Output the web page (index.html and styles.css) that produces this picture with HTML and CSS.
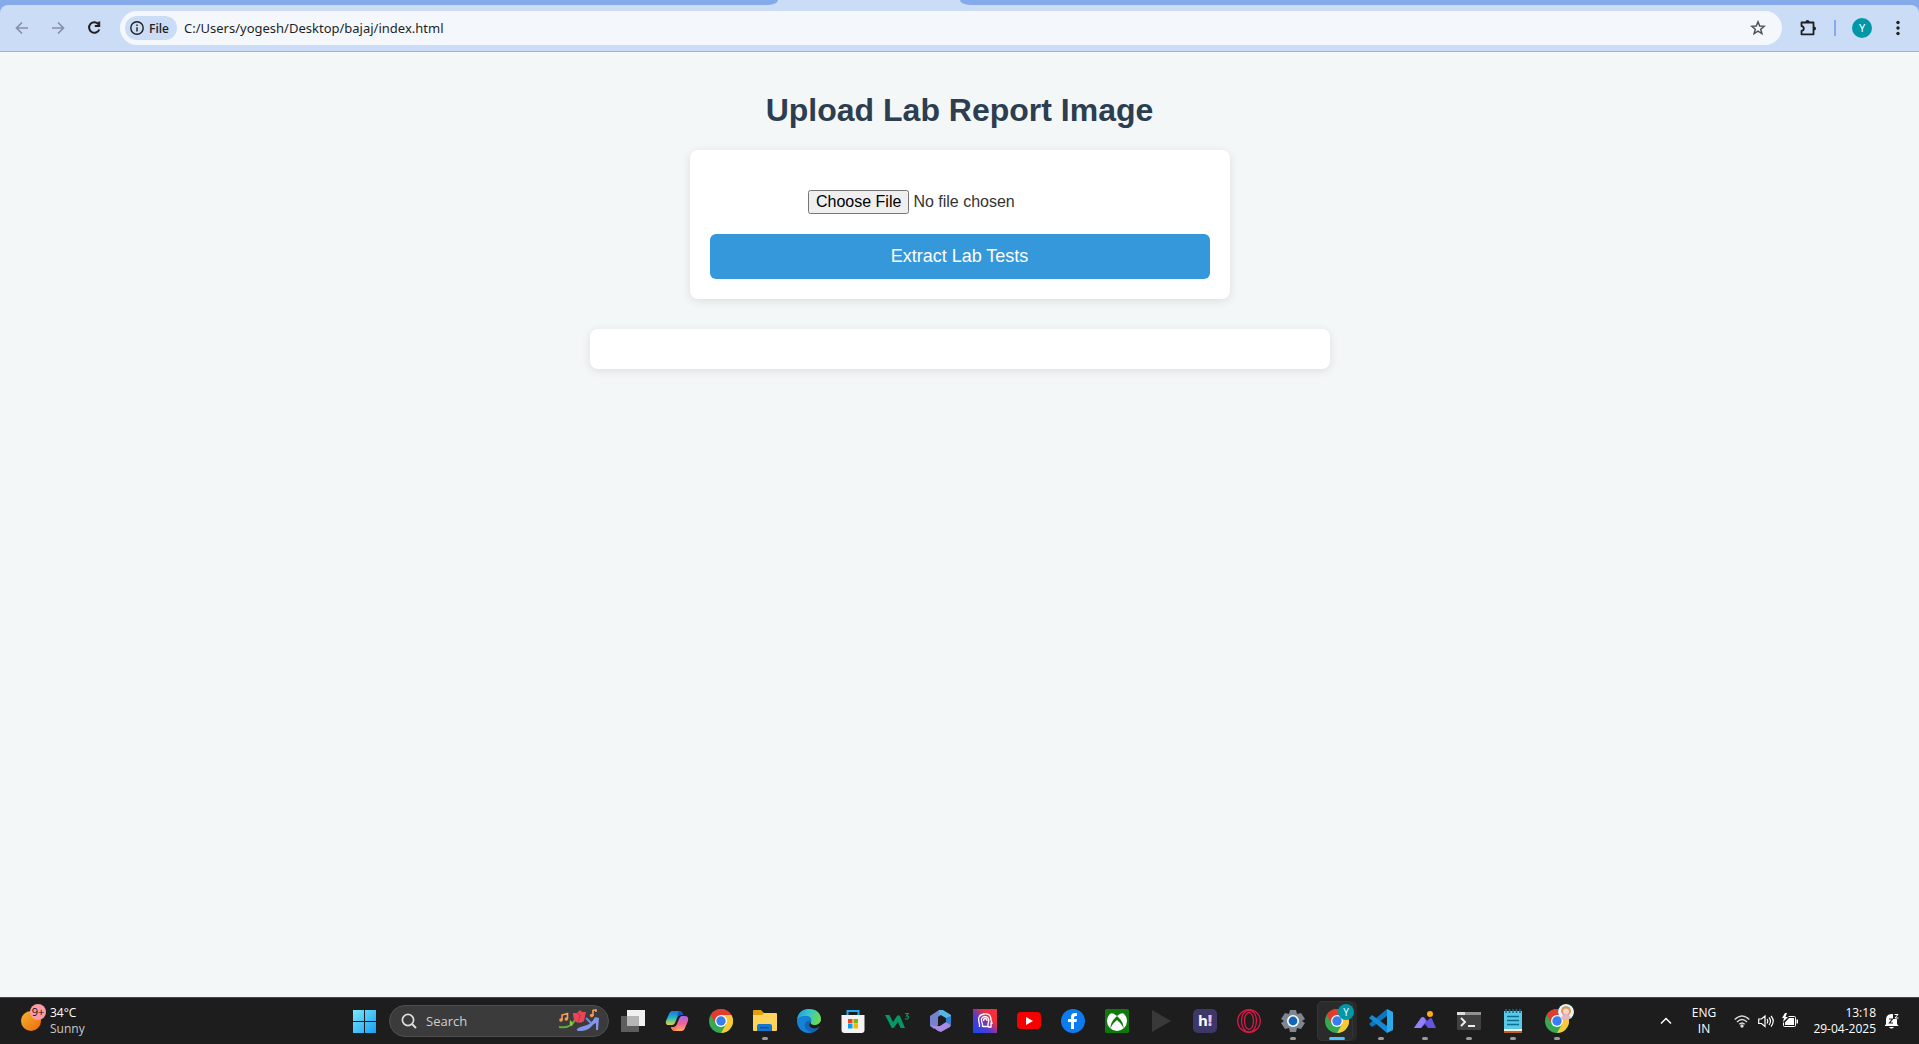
FILE: index.html
```html
<!DOCTYPE html>
<html lang="en">
<head>
<meta charset="utf-8">
<title>Upload Lab Report Image</title>
<link rel="stylesheet" href="styles.css">
</head>
<body>
<header class="browser">
  <div class="tabstrip"><span class="strip strip-left"></span><span class="strip strip-right"></span></div>
  <div class="toolbar-back">
  <nav class="toolbar" aria-label="Browser toolbar">
    <button class="tool muted" aria-label="Back"><svg width="16" height="16" viewBox="0 0 16 16" fill="none" stroke="currentColor" stroke-width="1.7"><path d="M14 8H3M8 2.5 2.5 8 8 13.500"/></svg></button>
    <button class="tool muted" aria-label="Forward"><svg width="16" height="16" viewBox="0 0 16 16" fill="none" stroke="currentColor" stroke-width="1.7"><path d="M2 8h11M8 2.500 13.500 8 8 13.500"/></svg></button>
    <button class="tool" aria-label="Reload"><svg width="16" height="16" viewBox="0 0 16 16" fill="none" stroke="currentColor" stroke-width="2"><path d="M12.600 4.300A5.300 5.300 0 1 0 13.300 9.500"/><path d="M13.200 1.600V6H8.800"/></svg></button>
    <div class="omnibox">
      <button class="chip"><svg width="14" height="14" viewBox="0 0 14 14" fill="none" stroke="currentColor" stroke-width="1.400"><circle cx="7" cy="7" r="6.200"/><path d="M7 6.200v4.200M7 3.500v1.500"/></svg>File</button>
      <input class="url" type="text" aria-label="Address" value="C:/Users/yogesh/Desktop/bajaj/index.html">
      <button class="tool star" aria-label="Bookmark"><svg width="16" height="16" viewBox="0 0 16 16" fill="none" stroke="currentColor" stroke-width="1.500"><path d="m8 1.800 1.700 4.200 4.500.3-3.500 2.900 1.200 4.400L8 11.200l-3.900 2.400 1.200-4.400-3.500-2.900 4.500-.3z"/></svg></button>
    </div>
    <button class="tool" aria-label="Extensions"><svg width="18" height="18" viewBox="0 0 18 18" fill="none" stroke="currentColor" stroke-width="1.800"><path d="M2.500 3.500h12v11.800h-12v-3.300q2.300-.5 2.300-2.500T2.500 7z" stroke-linejoin="round"/><path d="M6.500 3q0-2 2-2t2 2zM15 7.500q2 0 2 2t-2 2z" fill="currentColor" stroke="none"/></svg></button>
    <span class="divider"></span>
    <button class="tool" aria-label="Profile"><span class="avatar">Y</span></button>
    <button class="tool" aria-label="Menu"><svg width="4" height="16" viewBox="0 0 4 16" fill="currentColor"><circle cx="2" cy="2.500" r="1.700"/><circle cx="2" cy="8" r="1.700"/><circle cx="2" cy="13.500" r="1.700"/></svg></button>
  </nav>
  </div>
</header>

<main class="page">
  <h1 class="title">Upload Lab Report Image</h1>
  <form class="card">
    <input class="file" type="file" aria-label="Lab report image">
    <button class="submit" type="button">Extract Lab Tests</button>
  </form>
  <section class="results" aria-label="Results"></section>
</main>

<footer class="taskbar">
  <button class="weather">
    <span class="sun"><span class="badge">9+</span></span>
    <span class="weather-text"><span>34°C</span><span class="dim">Sunny</span></span>
  </button>
  <div class="apps">
    <button class="app" aria-label="Start"><svg viewBox="0 0 24 24"><defs><linearGradient id="win" x1="0" y1="0" x2="1" y2="1" ><stop stop-color="#7be8fb"/><stop offset="1" stop-color="#149ff5"/></linearGradient></defs><path fill="url(#win)" d="M1 1h11v11H1zM13 1h11v11H13zM1 13h11v11H1zM13 13h11v11H13z"/></svg></button>
    <label class="search">
      <svg width="16" height="16" viewBox="0 0 16 16" fill="none" stroke="#ddd" stroke-width="1.700"><circle cx="7" cy="7" r="5.600"/><path d="m11 11 4 4" stroke-width="2"/></svg>
      <input class="search-input" type="text" placeholder="Search" aria-label="Search">
      <svg width="42" height="24" viewBox="0 0 42 24"><g fill="none" stroke="#f0a060" stroke-width="1.600"><path d="M4 11V6l5.500-1.500V10"/><path d="M35 7V1.500l3-.5v2"/></g><g fill="#f09a58"><circle cx="3" cy="11" r="1.800"/><circle cx="8.300" cy="10" r="1.800"/><circle cx="33.700" cy="6.500" r="1.800"/></g><path d="M1 18q11 2 16-7" stroke="#5cae36" stroke-width="2" fill="none"/><path d="M12 11q-1 6 2 6 2-3-2-6z" fill="#8fca45"/><path d="m15 4 4 0 3-3 2 2 4 0-2 9q-3 3-8 1-3-2-3-9z" fill="#ec4457"/><path d="m19 4 3 2q0 4-2 6" fill="none" stroke="#c82848"/><path d="M19 20q2-2 7-3 8-2 11-9l4 1-1 12h-2v-7q-3 1-5 4-4 4-11 4-4 0-3-2z" fill="#8295ea"/><path d="m28 9 5 5" stroke="#6d8df0" fill="none" stroke-width="2"/></svg>
    </label>
    <button class="app" aria-label="Task view"><svg viewBox="0 0 24 24"><path fill="#f0f0f0" d="M6 1h18v16H6z"/><path fill="#5d5d5d" d="M0 7h18v16H0z"/><path fill="#b5b5b5" d="M6 7h12v10H6z"/></svg></button>
    <button class="app" aria-label="Copilot"><svg viewBox="0 0 24 24"><defs><linearGradient id="cp1" x2="0" y2="1"><stop stop-color="#1875e5"/><stop offset=".5" stop-color="#25b9c2"/><stop offset="1" stop-color="#e9d33c"/></linearGradient><linearGradient id="cp2" x2="0" y2="1"><stop stop-color="#a864e8"/><stop offset=".5" stop-color="#f06297"/><stop offset="1" stop-color="#ffab61"/></linearGradient></defs><path d="M7 2h7q3 0 4 4h-3q-2 0-3 3l-2 5q-1 2-3 2H4q-4 0-3-4l3-7q1-3 3-3z" fill="url(#cp1)"/><path d="M17 22h-7q-3 0-4-4h3q2 0 3-3l2-5q1-3 3-3h3q4 0 3 5l-3 7q-1 3-3 3z" fill="url(#cp2)"/><path d="M14 2q3 0 4 4h-3q-2 0-3 2 1-5 2-6z" fill="#1556c4"/><path d="M10 22q-3 0-4-4h3q2 0 3-2 0 4-2 6z" fill="#ff784d"/></svg></button>
    <button class="app" aria-label="Chrome"><svg viewBox="0 0 24 24"><defs><g id="chrome"><circle cx="12" cy="12" r="12" fill="#35a852"/><path d="M12 12 1.600 6A12 12 0 0 1 22.400 6z" fill="#e33b2e"/><path d="M12 6h10.400A12 12 0 0 1 12 24l5.200-9z" fill="#fcc934"/><path d="M1.600 6 6.800 15 12 6z" fill="#e33b2e"/><circle cx="12" cy="12" r="6" fill="#fff"/><circle cx="12" cy="12" r="4.700" fill="#377ff0"/></g></defs><use href="#chrome"/></svg></button>
    <button class="app open" aria-label="File Explorer"><svg viewBox="0 0 24 24"><path fill="#dfa009" d="M0 2q0-1 1-1h7l3 3H23v4H0z"/><path fill="#ffd45b" d="M0 6h9l2-2h12q1 0 1 1v16q0 1-1 1H1q-1 0-1-1z"/><path fill="#1675ce" d="M4 22v-5q0-2 2-2h11q2 0 2 2v5z"/><path fill="#0b559e" d="M7 18h9v1.500H7z"/></svg></button>
    <button class="app" aria-label="Edge"><svg viewBox="0 0 24 24"><defs><linearGradient id="ed" x1="0" y1="0" x2="1" y2=".3"><stop stop-color="#2397dc"/><stop offset=".5" stop-color="#32c5d0"/><stop offset="1" stop-color="#69da58"/></linearGradient></defs><circle cx="12" cy="12" r="12" fill="#1265b6"/><path d="M0 11C1 3 6 0 12 0c8 0 12 5 12 10 0 4-3 6-6 6-4 0-5-1-4-3 1-3-1-6-5-6-4 0-8 2-9 4z" fill="url(#ed)"/><path d="M0 11c2-3 6-4 9-4 4 0 6 3 5 6-1-2-5-2-6 2-1 5 3 8 8 8-9 3-16-3-16-12z" fill="#1682d5"/><path d="M14 13c-1 2 0 3 4 3 3 0 5-2 6-4v6c-1-1-2 0-4 1-6 2-10-3-6-6z" fill="#1d1d1d"/></svg></button>
    <button class="app" aria-label="Microsoft Store"><svg viewBox="0 0 24 24"><path d="M6.500 7V2h11v5" stroke="#22a8ef" stroke-width="2" fill="none"/><path fill="#f3f3f3" d="M.5 6h23v15q0 3-3 3h-17q-3 0-3-3z"/><path fill="#ef4423" d="M7 10h4.500v4.500H7z"/><path fill="#7db700" d="M12.500 10H17v4.500h-4.500z"/><path fill="#00a2ed" d="M7 15h4.500v4.500H7z"/><path fill="#fbb500" d="M12.500 15H17v4.500h-4.500z"/></svg></button>
    <button class="app" aria-label="W3Schools"><svg viewBox="0 0 24 24"><path d="M0 6h4.500L8 13l4-6q1.500-1.500 3 0l5 12h-4.500L13 13l-4 5.500q-1.500 1-2.500 0z" fill="#059862"/><path d="M20 4.500h3.300l-1.800 2.300q2.300 0 1.800 2t-3.300 1" stroke="#059862" stroke-width="1.200" fill="none"/></svg></button>
    <button class="app" aria-label="Microsoft 365"><svg viewBox="0 0 24 24"><path d="m10 1 5 3-6 4v8l-4 4-4-3V7z" fill="#7682ce"/><path d="m10 1 4 0 8 5v10l-5-3V9l-7-4z" fill="#53b8e5"/><path d="m1 16 5 1 5 0 6-4 5 3-1 2-9 5-3-1z" fill="#a98ae6"/><path d="M17 9v4l5 3V7z" fill="#357fd2"/></svg></button>
    <button class="app" aria-label="Head app"><svg viewBox="0 0 24 24"><defs><linearGradient id="hd" x1="0" y1="1" x2="1" y2="0"><stop stop-color="#1348ef"/><stop offset=".4" stop-color="#573acb"/><stop offset=".7" stop-color="#f52e3e"/></linearGradient></defs><path fill="url(#hd)" d="M0 0h24v24H0z"/><g fill="none" stroke="#fff" stroke-width="1.300"><path d="M6.500 18v-3q-3-9 4.500-10 7-1 7 6l1 3h-1v4h-3"/><path d="M9.500 18v-3q-3-7 2.500-7.500 5.500.5 3 7.500v2.500h-5"/><path d="M10.500 12q0-2.500 1.800-2.500T14 12"/></g></svg></button>
    <button class="app" aria-label="YouTube"><svg viewBox="0 0 24 24"><rect y="3" width="24" height="17" rx="4" fill="#f80000"/><path d="m9 8 7 4-7 4z" fill="#fff"/></svg></button>
    <button class="app" aria-label="Facebook"><svg viewBox="0 0 24 24"><circle cx="12" cy="12" r="12" fill="#0d7cf0"/><path d="M10 20v-7H7v-3h3V8q0-4 4-4h2v3h-1.500q-1.500 0-1.500 1.500V10h3l-.5 3H13v7z" fill="#fff"/></svg></button>
    <button class="app" aria-label="Xbox"><svg viewBox="0 0 24 24"><rect width="24" height="24" rx="1.500" fill="#0e7a0d"/><circle cx="12" cy="12" r="10" fill="#fff"/><path d="M5 4q4 0 7 3 3-3 7-3-3-2.500-7-2.500T5 4zM12 11q6 5 7 10-1-9-5-12l-2-2-2 2q-4 3-5 12 1-5 7-10z" fill="#0e7a0d"/></svg></button>
    <button class="app" aria-label="Player"><svg viewBox="0 0 24 24"><path d="M3 1v22l19-11z" fill="#393939"/></svg></button>
    <button class="app" aria-label="Hi"><span class="hi">h<b>!</b></span></button>
    <button class="app" aria-label="Opera"><svg viewBox="0 0 24 24" fill="none" stroke="#dc1848" stroke-width="1.300"><circle cx="12" cy="12" r="11.300"/><ellipse cx="12" cy="12" rx="7.500" ry="11"/><ellipse cx="12" cy="12" rx="4.500" ry="8.500"/></svg></button>
    <button class="app open" aria-label="Settings"><svg viewBox="0 0 24 24"><path d="M9 1h6l1 4 4-1 4 6-3 2 3 2-4 6-4-1-1 4H9l-1-4-4 1-4-6 3-2-3-2 4-6 4 1z" fill="#7d8790"/><circle cx="12" cy="12" r="6" fill="#fff"/><circle cx="12" cy="12" r="4.400" fill="#1266b8"/></svg></button>
    <button class="app open current" aria-label="Chrome, Y"><svg viewBox="0 0 24 24"><use href="#chrome"/></svg><span class="profile">Y</span></button>
    <button class="app open" aria-label="Visual Studio Code"><svg viewBox="0 0 24 24"><path d="m18 0 6 3v18l-6 3z" fill="#2aa9ee"/><path d="M18 0v7L3 18l-3-3z" fill="#0878bf"/><path d="m0 9 3-3 15 11v7z" fill="#1489d5"/></svg></button>
    <button class="app open" aria-label="Mountains"><svg viewBox="0 0 24 24"><path d="M1 19 8 9q2-2 4 0l2 3 2-2q2-2 3 0l4 9h-8l-3-4-4 4z" fill="#6554df"/><path d="M1 19 8 9q2-2 3 0l2 3-5 7z" fill="#9181fa"/><circle cx="17" cy="5" r="3" fill="#ffac15"/></svg></button>
    <button class="app open" aria-label="Terminal"><svg viewBox="0 0 24 24"><path fill="#414141" d="M0 6h24v14q0 1-1 1H1q-1 0-1-1z"/><path fill="#929292" d="M0 3h24v3H0z"/><path fill="#dedede" d="M0 3h8v3H0z"/><path d="m4 9 4 4-4 4M11 17h7" fill="none" stroke="#eee" stroke-width="2"/></svg></button>
    <button class="app open" aria-label="Notepad"><svg viewBox="0 0 24 24"><path fill="#5bc8e6" d="M3 2h18v19H3z"/><path fill="#f4f1e9" d="M3 20h18v2H3z"/><path fill="#bd6515" d="M3 22h18v2H3z"/><path d="M5 0v4M8.500 0v4M12 0v4M15.500 0v4M19 0v4M6 7.500h12M6 11.500h12M6 15.500h12" stroke="#096e91" stroke-width="1.500"/></svg></button>
    <button class="app open" aria-label="Chrome, second profile"><svg viewBox="0 0 24 24"><use href="#chrome"/></svg><svg class="profile" viewBox="0 0 16 16"><circle cx="8" cy="8" r="8" fill="#f3eef0"/><path d="M3 8q0-6 5-6t5 6l-2 3H5z" fill="#cf9b62"/><circle cx="8" cy="7.500" r="3" fill="#f8d7bf"/><path d="M3 14q2-4 5-4t5 4q-5 4-10 0z" fill="#e5b4c8"/></svg></button>
  </div>
  <div class="tray">
    <button class="tray-btn chevron" aria-label="Hidden icons"><svg width="12" height="8" viewBox="0 0 12 8" fill="none" stroke="#fff" stroke-width="1.500"><path d="m1 6.500 5-5 5 5"/></svg></button>
    <button class="tray-btn lang"><span>ENG</span><span>IN</span></button>
    <button class="tray-btn status" aria-label="Network, volume, battery">
      <svg width="16" height="16" viewBox="0 0 16 16" fill="none" stroke="#ddd" stroke-width="1.400"><path d="M.7 6.500q7.300-7 14.600 0M3 9q5-4.800 10 0M5.300 11.300q2.700-2.600 5.400 0"/><circle cx="8" cy="13" r="1" fill="#fff"/></svg>
      <svg width="16" height="16" viewBox="0 0 16 16" fill="none" stroke="#fff" stroke-width="1.200"><path d="M.7 6h2.800L7 3v10.500L3.500 10.500H.7zM9 6q1.500 2 0 4.500M11 4.500q3 3.500 0 7.500M13 3q4.500 5 0 10.500"/></svg>
      <svg width="16" height="16" viewBox="0 0 16 16"><path d="M6.500 3.500h6q1 0 1 1v8q0 1-1 1h-10q-1 0-1-1V9.500" fill="none" stroke="#fff"/><path d="M7 5h5v7H3V9.500zM14.500 6.500H16v4h-1.500z" fill="#fff"/><path d="M3 0 0 5h2L1 9l5-5H3.500L5 0z" fill="#fff"/></svg>
    </button>
    <button class="tray-btn clock"><span>13:18</span><span>29-04-2025</span></button>
    <button class="tray-btn bell" aria-label="Notifications"><svg width="16" height="16" viewBox="0 0 16 16"><path d="M2 11V7q0-6 6-6 5 0 5 6v4l1.500 2H.7zM5 14h5q-2.500 3-5 0z" fill="#fff"/><path d="M5 6h3.500L5.500 10H9" stroke="#1d1d1d" stroke-width="1.200" fill="none"/><path d="M9 0h6v6H9z" fill="#1d1d1d"/><path d="M10.500 1.500h3.500l-3 3.500h3.500" stroke="#fff" fill="none"/></svg></button>
  </div>
</footer>
</body>
</html>
```
FILE: styles.css
```css
* { box-sizing: border-box; }

body {
  margin: 0;
  min-height: 100vh;
  display: flex;
  flex-direction: column;
  background: #f4f7f8;
  color: #333;
  font-family: "Liberation Sans", Arial, sans-serif;
}

button { font: inherit; color: inherit; background: none; border: 0; padding: 0; }
svg { display: block; flex: none; }

/* Browser chrome */
.browser { font-family: "Noto Sans", "Open Sans", sans-serif; background: #cbdcf6; }
.tabstrip { display: flex; justify-content: space-between; height: 5px; }
.strip { background: #84aaea; }
.strip-left { width: calc(50% - 182px); border-bottom-right-radius: 10px 5px; }
.strip-right { width: 50%; border-bottom-left-radius: 10px 5px; }
.toolbar-back { background: #84aaea; }
.toolbar {
  display: flex;
  align-items: center;
  height: 47px;
  padding: 0 3px 0 4px;
  background: #cbdcf6;
  border-bottom: 1px solid #a3b0c8;
  border-radius: 8px 8px 0 0;
}
.tool { width: 36px; height: 34px; display: flex; align-items: center; justify-content: center; color: #1f1f1f; }
.muted { color: #8590a6; }
.omnibox {
  flex: 1;
  display: flex;
  align-items: center;
  height: 34px;
  margin: 0 8px;
  padding: 0 6px 0 5px;
  border-radius: 17px;
  background: #f4f8fd;
}
.chip {
  display: flex;
  align-items: center;
  gap: 5px;
  height: 24px;
  padding: 0 8px 0 5px;
  border-radius: 12px;
  background: #cbdcf6;
  color: #1f1f1f;
  font: 600 12px "Open Sans", "Noto Sans", sans-serif;
}
.url { flex: 1; border: 0; padding: 0 7px; background: none; color: #1f1f1f; font: 13px "Noto Sans", "Open Sans", sans-serif; outline: 0; }
.star { color: #50545a; }
.divider { width: 2px; height: 16px; margin: 0 8px; background: #84aaea; }
.avatar { width: 20px; height: 20px; border-radius: 50%; background: #0097a7; color: #fff; font-size: 11px; line-height: 20px; text-align: center; }

/* Lab report page */
.page { flex: 1; display: flex; flex-direction: column; align-items: center; padding: 40px 20px; }
.title { margin: 0 0 21px; color: #2c3e50; font-size: 32px; line-height: 37px; }
.card, .results {
  width: 100%;
  background: #fff;
  border-radius: 8px;
  box-shadow: 0 2px 10px rgba(0, 0, 0, 0.1);
  padding: 20px;
}
.card { max-width: 540px; display: flex; flex-direction: column; align-items: center; }
.file { margin: 20px 0; height: 24px; font: 16px "Liberation Sans", Arial, sans-serif; }
.submit { width: 100%; padding: 12px; border-radius: 6px; background: #3498db; color: #fff; font-size: 18px; line-height: 21px; }
.results { max-width: 740px; margin-top: 30px; }

/* Taskbar */
.taskbar {
  display: grid;
  grid-template-columns: 1fr auto 1fr;
  height: 47px;
  padding-left: 2px;
  background: #1d1d1d;
  border-top: 1px solid #484848;
  color: #fff;
  font: 12px/16px "Open Sans", "Noto Sans", sans-serif;
}
.weather { justify-self: start; display: flex; align-items: center; gap: 9px; padding-left: 19px; text-align: left; }
.weather-text, .lang, .clock { display: flex; flex-direction: column; }
.dim { color: #c8c8c8; }
.sun { position: relative; width: 20px; height: 20px; border-radius: 50%; background: linear-gradient(135deg, #f0b730, #f0670c); }
.badge { position: absolute; left: 9px; top: -7px; width: 16px; height: 16px; border-radius: 50%; background: #ff99a4; color: #111; font-size: 11px; text-align: center; }
.apps { display: flex; align-items: center; }
.app { position: relative; width: 44px; height: 40px; display: flex; align-items: center; justify-content: center; }
.app > svg { width: 24px; height: 24px; }
.search {
  display: flex;
  align-items: center;
  width: 220px;
  height: 32px;
  margin: 0 2px 0 3px;
  padding: 0 8px 0 11px;
  border: 1px solid #505050;
  border-radius: 16px;
  background: #3b3b3b;
}
.search-input { flex: 1; min-width: 0; border: 0; padding: 0 9px; background: none; color: #fff; font: 13px "Open Sans", "Noto Sans", sans-serif; outline: 0; }
.search-input::placeholder { color: #cfcfcf; }
.open::after { content: ""; position: absolute; bottom: 1px; width: 6px; height: 3px; border-radius: 2px; background: #9a9a9a; }
.current::before { content: ""; position: absolute; inset: 0 6px 0 2px; border: 1px solid #353535; border-radius: 5px; background: #2b2b2b; box-shadow: 4px 0 0 #292929; }
.current > svg { position: relative; }
.current::after { width: 16px; background: #4cc2ff; }
.app > .profile { position: absolute; left: 23px; top: 3px; width: 16px; height: 16px; border-radius: 50%; background: #0097a7; font-size: 10px; text-align: center; }
.hi { width: 24px; height: 24px; border-radius: 5px; background: #3e3868; font: bold 15px/23px "Open Sans", sans-serif; text-align: center; }
.hi b { color: #fab8ee; }
.tray { justify-self: end; display: flex; align-items: center; padding-right: 19px; }
.tray-btn { height: 40px; }
.chevron { width: 28px; display: flex; align-items: center; justify-content: center; }
.lang { width: 48px; align-items: center; justify-content: center; }
.status { display: flex; align-items: center; gap: 8px; padding: 0 6px; }
.clock { width: 72px; align-items: flex-end; justify-content: center; }
.bell { display: flex; align-items: center; margin-left: 8px; }
```
